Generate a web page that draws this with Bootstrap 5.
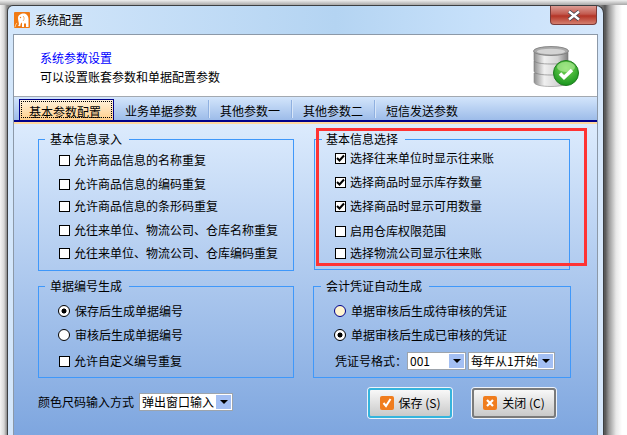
<!DOCTYPE html>
<html lang="zh">
<head>
<meta charset="utf-8">
<title>系统配置</title>
<link href="https://cdn.jsdelivr.net/npm/bootstrap@5.3.0/dist/css/bootstrap.min.css" rel="stylesheet">
<style>
html,body{height:435px;overflow:hidden}
body{background:linear-gradient(90deg,#f4f4f4 0,#d8d8d8 4px,#8a8a8a 7px,#8a8a8a 600px,#555 605px,#9a9a9a 609px,#e8e8e8 616px,#fff 622px);font:12px/16px "Noto Sans CJK SC","Liberation Sans",sans-serif;color:#000;padding:5px 23px 0 7px;position:relative}
.shade-top{position:absolute;left:0;right:0;top:0;height:5px;background:linear-gradient(#efefef,#a8a8a8)}
.win{position:relative;width:597px;height:430px;border:1px solid #3c3f42;border-bottom:0;border-radius:6px 8px 0 0;background:linear-gradient(90deg,#d4e7fb,#b4d4f2 55%,#c6e0fa 78%,#d6e8fc);padding:0 5px}
.tbar{height:28px;gap:5px;padding-left:1px}
.tbar-title{font-size:12px;text-shadow:0 0 4px #fff}
.closebtn{position:absolute;right:6px;top:0;width:47px;height:19px;border:1px solid #7a3a38;border-top:0;border-radius:0 0 4px 4px;background:linear-gradient(#dc9c94 0,#c2594e 45%,#b43426 55%,#d47f6f 100%);display:flex;align-items:center;justify-content:center}
.frame{border:1px solid #8c99a8;border-bottom:0;height:401px;background:#fff}
.head{height:61px;padding:11px 18px 0 26px}
.head-t{color:#0000ff;line-height:19px;margin-top:-9px;padding-top:11px}
.head-s{line-height:20px}
.head svg{flex:none}
.tabs{height:26px;border-top:1px solid #a3a9b0;background:linear-gradient(#d3e5fb,#9dbce9);padding:2px 0 0 5px;border-bottom:2px solid #00008a}
.tabitem{height:21px;position:relative;white-space:nowrap;line-height:17px}
.tabitem+.tabitem::before{content:"";position:absolute;left:-1px;top:1px;height:18px;width:1px;background:#8fb0e0;box-shadow:1px 0 0 #d8e6f8}
.tabsel{width:95px;padding:3px 9px 0;background:linear-gradient(#fff2dc,#ffcf8a);border:1px solid #00008a;border-bottom:0;outline:1px dotted #000;outline-offset:-3px}
.tabsel+.tabitem::before{display:none}
.tabn{padding:3px 12px 0 11px}
.pane{height:313px;border-top:2px solid #ffd9a0;background:linear-gradient(#dcebfd,#7ea6df);padding:7px 0 0 24px}
.grp{border:1px solid #3f98fa;margin:0;padding:0;min-width:0;width:256px}
.grp legend{float:none;width:auto;font-size:12px;line-height:16px;margin:0 0 0 -14px;padding:0 7px 0 5px}
.grp1{height:140px;padding:5px 0 0 20px}
.grp1b{height:139px;padding:3px 0 0 20px}
.grp1b legend{margin-left:-13px;padding:0 7px 0 4px}
.grp2{height:100px;padding:9px 0 0 19px}
.grp2 legend{margin-left:-13px}
.grp2b{width:258px;padding-left:20px}
.grp2b legend{margin-left:-13px;padding:0 7px 0 5px}
.gridrow{display:grid;grid-template-columns:256px 256px;column-gap:20px}
.gridrow2{grid-template-columns:256px 258px;column-gap:19px;margin-top:7px}
.rowitem{display:flex;align-items:center;gap:4px;white-space:nowrap;height:16px;margin-bottom:8px}
.gap22{margin-bottom:6px}.gap23{margin-bottom:7px}.gap25{margin-bottom:9px}.gap26{margin-bottom:10px}
.radioitem{gap:5px}
.nudge{margin-left:1px}
.cb{appearance:none;width:11px;height:11px;margin:0;flex:none;border:1px solid #000;background-color:#fff;background-repeat:no-repeat;background-position:center;display:block;box-shadow:none;border-radius:0}
.cb:checked{background-image:url("data:image/svg+xml,%3Csvg xmlns='http://www.w3.org/2000/svg' width='9' height='9'%3E%3Cpath d='M1 4l2.5 2.5L8 1.5' fill='none' stroke='%23000' stroke-width='2'/%3E%3C/svg%3E")}
.rd{appearance:none;width:12px;height:12px;margin:0;flex:none;border:1px solid #000;border-radius:50%;background-color:#fff;display:block}
.rd:checked{background:radial-gradient(circle,#000 2.2px,#fff 2.8px)}
.rdh{background-color:#fff4cf;border-color:#00008a}
.sel{display:inline-flex;align-items:center;height:18px;border:1px solid #9da4ac;background:#fff;padding:1px 1px 1px 2px;justify-content:space-between;white-space:nowrap;line-height:14px}
.sel-arrow{width:15px;height:14px;background:#a3bff3;display:flex;align-items:center;justify-content:center;flex:none}
.sel-arrow::after{content:"";border:4px solid transparent;border-top:4px solid #000;border-bottom:0}
.s1{width:59px}.s2{width:87px;margin-left:2px}.s3{width:94px;margin:5px 0 0 5px}
.foot{height:30px;margin-top:10px}
.foot-label{margin-top:6px}
.fbtn{width:84px;height:30px;border:2px solid #7a7a7a;border-radius:3px;background:linear-gradient(#f8f8f8,#c9c9c9);box-shadow:0 0 0 1px #eef3fa;padding:0;gap:5px;font-size:12px;color:#000;display:flex;align-items:center;justify-content:center;margin-right:41px}
.fbtn:hover{background:linear-gradient(#f8f8f8,#c9c9c9);color:#000}
.fsave{border-color:#35b4dd;margin-left:auto;margin-right:20px}
.ficon{width:14px;height:14px;flex:none}
.redbox{position:absolute;left:316px;top:128px;width:271px;height:138px;border:3px solid #ff3333;z-index:5}
</style>
</head>
<body>
<div class="shade-top"></div>
<div class="win">
  <div class="tbar d-flex align-items-center">
    <svg width="16" height="16" viewBox="0 0 16 16"><rect width="16" height="16" rx="1" fill="#f07a14"/><path d="M4 6c0-3 3-4.500 5.500-4.500S14.500 3.500 14.500 7v8H12v-3.500h-2V15H8V10.500C7 11 6.500 11.500 6.500 13c0 1.500-2 1.500-2.500.5 1 0 1-1 .8-2.500C4.500 9 4 8 4 6z" fill="#fff"/><path d="M9 4c1.500 1 1.500 3.500 0 5" fill="none" stroke="#f4b070"/><circle cx="6.500" cy="5.500" r=".7" fill="#f07a14"/><path d="M1 15c.6-2 1-3 2-4" stroke="#ffd9a8" fill="none"/></svg>
    <span class="tbar-title">系统配置</span>
  </div>
  <div class="closebtn"><svg width="14" height="11" viewBox="0 0 14 11"><path d="M2 1.500l10 8M12 1.500l-10 8" stroke="#39424d" stroke-width="4" fill="none"/><path d="M2 1.500l10 8M12 1.500l-10 8" stroke="#fff" stroke-width="2.400" fill="none"/></svg></div>
  <div class="frame">
    <div class="head d-flex justify-content-between">
      <div>
        <div class="head-t">系统参数设置</div>
        <div class="head-s">可以设置账套参数和单据配置参数</div>
      </div>
      <svg width="47" height="41" viewBox="0 0 47 41">
        <defs>
          <linearGradient id="dbg" x1="0" x2="1" y1="0" y2="0"><stop offset="0" stop-color="#8f8f8f"/><stop offset=".3" stop-color="#f0f0f0"/><stop offset=".7" stop-color="#d4d4d4"/><stop offset="1" stop-color="#7f7f7f"/></linearGradient>
          <radialGradient id="gbg" cx=".5" cy=".3" r=".75"><stop offset="0" stop-color="#7edb5a"/><stop offset="1" stop-color="#0f8f18"/></radialGradient>
        </defs>
        <path d="M2 27h34v9c0 3-8 4.500-17 4.500S2 39 2 36z" fill="url(#dbg)" stroke="#8a8a8a" stroke-width=".6"/>
        <path d="M2 15h34v10c0 3-8 4-17 4S2 28 2 25z" fill="url(#dbg)" stroke="#777" stroke-width=".6"/>
        <path d="M2 5h34v9c0 3-8 4-17 4S2 17 2 14z" fill="url(#dbg)" stroke="#777" stroke-width=".6"/>
        <ellipse cx="19" cy="5" rx="17.500" ry="4.500" fill="#aaa" stroke="#777" stroke-width=".8"/>
        <ellipse cx="19" cy="5.500" rx="14" ry="2.800" fill="#d4d4d4"/>
        <circle cx="34" cy="27" r="12.500" fill="url(#gbg)" stroke="#1f7a1f"/>
        <ellipse cx="34" cy="21" rx="9" ry="5" fill="#b8eea0" opacity=".6"/>
        <path d="M28 27.500l4 4 8-7.500" fill="none" stroke="#fff" stroke-width="3.600"/>
      </svg>
    </div>
    <div class="tabs d-flex">
      <div class="tabitem tabsel">基本参数配置</div>
      <div class="tabitem tabn">业务单据参数</div>
      <div class="tabitem tabn">其他参数一</div>
      <div class="tabitem tabn">其他参数二</div>
      <div class="tabitem tabn">短信发送参数</div>
    </div>
    <div class="pane">
      <div class="gridrow">
        <fieldset class="grp grp1">
          <legend>基本信息录入</legend>
          <label class="rowitem"><input class="cb" type="checkbox">允许商品信息的名称重复</label>
          <label class="rowitem gap22"><input class="cb" type="checkbox">允许商品信息的编码重复</label>
          <label class="rowitem"><input class="cb" type="checkbox">允许商品信息的条形码重复</label>
          <label class="rowitem gap23"><input class="cb" type="checkbox">允往来单位、物流公司、仓库名称重复</label>
          <label class="rowitem"><input class="cb" type="checkbox">允往来单位、物流公司、仓库编码重复</label>
        </fieldset>
        <fieldset class="grp grp1b">
          <legend>基本信息选择</legend>
          <label class="rowitem"><input class="cb" type="checkbox" checked>选择往来单位时显示往来账</label>
          <label class="rowitem"><input class="cb" type="checkbox" checked>选择商品时显示库存数量</label>
          <label class="rowitem gap25"><input class="cb" type="checkbox" checked>选择商品时显示可用数量</label>
          <label class="rowitem gap22"><input class="cb" type="checkbox">启用仓库权限范围</label>
          <label class="rowitem"><input class="cb" type="checkbox">选择物流公司显示往来账</label>
        </fieldset>
      </div>
      <div class="gridrow gridrow2">
        <fieldset class="grp grp2">
          <legend>单据编号生成</legend>
          <label class="rowitem radioitem"><input class="rd" type="radio" name="a" checked>保存后生成单据编号</label>
          <label class="rowitem radioitem gap26"><input class="rd" type="radio" name="a">审核后生成单据编号</label>
          <label class="rowitem nudge"><input class="cb" type="checkbox">允许自定义编号重复</label>
        </fieldset>
        <fieldset class="grp grp2 grp2b">
          <legend>会计凭证自动生成</legend>
          <label class="rowitem radioitem"><input class="rd rdh" type="radio" name="b">单据审核后生成待审核的凭证</label>
          <label class="rowitem radioitem gap26"><input class="rd" type="radio" name="b" checked>单据审核后生成已审核的凭证</label>
          <div class="rowitem gap-0 nudge">凭证号格式：<span class="sel s1">001<i class="sel-arrow"></i></span><span class="sel s2">每年从1开始<i class="sel-arrow"></i></span></div>
        </fieldset>
      </div>
      <div class="foot d-flex align-items-start">
        <span class="foot-label">颜色尺码输入方式</span><span class="sel s3">弹出窗口输入<i class="sel-arrow"></i></span>
        <button type="button" class="btn fbtn fsave">
          <svg class="ficon" viewBox="0 0 14 14"><rect width="14" height="14" rx="2" fill="#f07d1e"/><path d="M3.500 7l2.500 3 4.500-7" fill="none" stroke="#fff" stroke-width="2"/></svg>保存 (S)
        </button>
        <button type="button" class="btn fbtn">
          <svg class="ficon" viewBox="0 0 14 14"><rect width="14" height="14" rx="2" fill="#f07d1e"/><path d="M4 4l6 6M10 4l-6 6" fill="none" stroke="#fff" stroke-width="2.200"/></svg>关闭 (C)
        </button>
      </div>
    </div>
  </div>
</div>
<div class="redbox"></div>
</body>
</html>
